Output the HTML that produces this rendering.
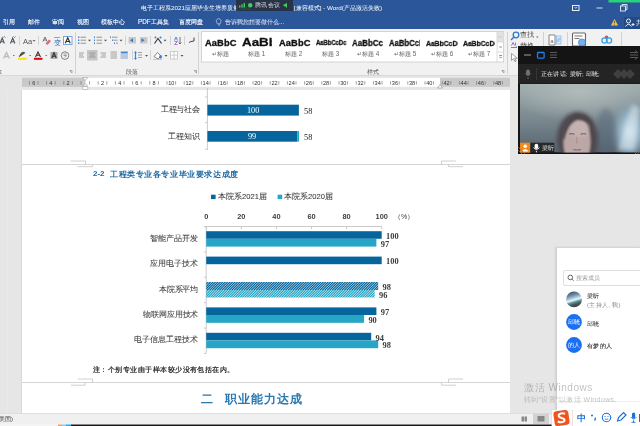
<!DOCTYPE html>
<html><head><meta charset="utf-8">
<style>
*{margin:0;padding:0;box-sizing:border-box}
html,body{width:640px;height:426px;overflow:hidden;background:#e6e6e6;font-family:"Liberation Sans",sans-serif;position:relative}
.a{position:absolute}
.t{position:absolute;white-space:nowrap;line-height:1;will-change:transform}
#titlebar{left:0;top:0;width:640px;height:29px;background:#2b579a}
#ribbon{left:0;top:29px;width:640px;height:47px;background:#f1f1f1;border-bottom:1px solid #d8d8d8}
#rulerrow{left:0;top:76px;width:640px;height:12px;background:#e6e6e6}
#page{left:22px;top:89.5px;width:488px;height:323.5px;background:#fff}
#status{left:0;top:413px;width:640px;height:11px;background:#f0f0f0;border-top:1px solid #dedede}
#taskbar{left:0;top:424px;width:640px;height:2px;background:#f4f4f4}
.tab{top:19px;font-size:6.3px;color:#fff;-webkit-text-stroke:0.1px currentColor}
.ttl{font-size:6.25px;color:#fff}
</style></head><body>
<!-- TITLE BAR -->
<div id="titlebar" class="a">
  <div class="t ttl" style="left:141px;top:5px">电子工程系2021应届毕业生培养质量.doc</div>
  <div class="t ttl" style="left:294px;top:5px">[兼容模式] - Word(产品激活失败)</div>
  <div class="t tab" style="left:3px">引用</div>
  <div class="t tab" style="left:28px">邮件</div>
  <div class="t tab" style="left:52px">审阅</div>
  <div class="t tab" style="left:77px">视图</div>
  <div class="t tab" style="left:101px">模板中心</div>
  <div class="t tab" style="left:137.5px">PDF工具集</div>
  <div class="t tab" style="left:179px">百度网盘</div>
  <div class="t tab" style="left:224.5px;color:#c9d5ea">告诉我您想要做什么...</div>
</div>
<svg class="a" style="left:0;top:0" width="640" height="29" viewBox="0 0 640 29">
 <rect x="236" y="0" width="57" height="11" fill="#27303c" opacity="0.88"/>
 <g fill="#3fd05a"><rect x="239" y="5.5" width="1.4" height="2"/><rect x="241.3" y="4.3" width="1.4" height="3.2"/><rect x="243.6" y="3" width="1.4" height="4.5"/></g>
 <circle cx="250.2" cy="5.2" r="2.2" fill="#3fd05a"/>
 <path d="M283.5,4.3 h1.5 l2,-1.6 v5.2 l-2,-1.6 h-1.5z" fill="#3fd05a"/>
 <rect x="572.5" y="5.5" width="6.5" height="5" fill="none" stroke="#fff" stroke-width="0.9"/>
 <path d="M574.5,7 l1.25,1.4 l1.25,-1.4" stroke="#fff" stroke-width="0.7" fill="none"/>
 <path d="M596.5,8 h6" stroke="#fff" stroke-width="0.8"/>
 <rect x="620.5" y="6" width="5" height="5" fill="none" stroke="#fff" stroke-width="0.8"/>
 <path d="M622,6 v-1.5 h5 v5 h-1.5" stroke="#fff" stroke-width="0.8" fill="none"/>
 <rect x="608.5" y="0" width="31.5" height="2.5" fill="#28d17c"/>
 <path d="M614.5,19 l3.6,6.5 h-7.2z" fill="#f3c14a"/>
 <path d="M614.5,21 v2.4 M614.5,24.2 v0.6" stroke="#333" stroke-width="0.7"/>
 <rect x="624" y="17" width="16" height="12" fill="#234a86"/>
 <circle cx="628.5" cy="21" r="2" fill="none" stroke="#fff" stroke-width="0.9"/>
 <path d="M625.5,26.5 q3,-4.5 6,0 M631.5,24.5 h3 M633,23 v3" stroke="#fff" stroke-width="0.9" fill="none"/>
 <path d="M216.8,22.5 a2.4,2.4 0 1,1 3.8,0 l-0.5,1.3 h-2.8z M218,25 h2.2" stroke="#c9d5ea" stroke-width="0.7" fill="none"/>
</svg>
<div class="t" style="left:255px;top:2.2px;font-size:6px;color:#d8d8d8;letter-spacing:0.3px">腾讯会议</div>
<div class="t" style="left:636px;top:19.5px;font-size:6.5px;color:#fff">共</div>
<!-- RIBBON -->
<div id="ribbon" class="a"></div>
<svg class="a" style="left:0;top:0" width="640" height="90" viewBox="0 0 640 90">
 <g fill="none" stroke="#d2d2d2" stroke-width="1">
  <line x1="75.5" y1="32" x2="75.5" y2="74"/>
  <line x1="198.5" y1="32" x2="198.5" y2="74"/>
  <line x1="507.5" y1="32" x2="507.5" y2="74"/>
  <line x1="543.5" y1="32" x2="543.5" y2="74"/>
  <line x1="567.5" y1="32" x2="567.5" y2="74"/>
  <line x1="621.5" y1="32" x2="621.5" y2="74"/>
  <line x1="19.5" y1="36" x2="19.5" y2="45"/>
  <line x1="38.5" y1="36" x2="38.5" y2="45"/>
  <line x1="125.5" y1="36" x2="125.5" y2="45"/>
  <line x1="150.5" y1="36" x2="150.5" y2="45"/>
  <line x1="170.5" y1="36" x2="170.5" y2="45"/>
  <line x1="184.5" y1="36" x2="184.5" y2="45"/>
  <line x1="132.5" y1="50" x2="132.5" y2="60"/>
  <line x1="150.5" y1="50" x2="150.5" y2="60"/>
 </g>
 <!-- font group row1 -->
 <g fill="none" stroke="#555" stroke-width="1.1">
  <path d="M0,43.5 L2.2,38 L4.4,43.5 M0.8,41.8 H3.6"/>
  <path d="M10.5,43.5 L12.7,38 L14.9,43.5 M11.3,41.8 H14.1"/>
 </g>
 <path d="M3.3,37.5 l1,-1 l1,1 M13.5,36.5 l1,1 l1,-1" stroke="#2f79c8" stroke-width="1" fill="none"/>
 <text x="23" y="43.5" font-family="Liberation Sans" font-size="7.5" fill="#555">Aa</text>
 <path d="M32.5,40 h3 l-1.5,1.8z" fill="#666"/>
 <path d="M43,41.5 L45,37 L47,41.5 M43.6,40 H46.4" stroke="#666" stroke-width="0.9" fill="none"/>
 <path d="M45.5,43.5 L49,39.5 L51,41 L47.5,45z" fill="#e8667a"/>
 <path d="M54,37.5 h6" stroke="#888" stroke-width="0.8"/>
 <text x="54" y="44.5" font-size="6.5" fill="#2f6fb8" font-family="Liberation Sans">变</text>
 <rect x="63.5" y="36.5" width="8.5" height="8" fill="#fff" stroke="#7aa7d8" stroke-width="1"/>
 <path d="M65.3,43.3 L67.75,37.7 L70.2,43.3 M66.2,41.5 H69.3" stroke="#333" stroke-width="1.2" fill="none"/>
 <!-- font group row2 -->
 <path d="M3.5,58.5 L6.5,52.5 L9.5,58.5 M4.7,56.5 H8.3" stroke="#bdbdbd" stroke-width="1.3" fill="none"/>
 <path d="M13,55.5 h1.5 M29.5,55.5 h1.5 M45.5,55.5 h1.5" stroke="#777" stroke-width="1"/>
 <path d="M19,56.5 L25,52.5 M20,55.5 l2,-3 M22,53.5 l1.5,-1.5" stroke="#444" stroke-width="1.1" fill="none"/>
 <rect x="18" y="57.8" width="8.5" height="2" fill="#f5e400"/>
 <path d="M35.5,57 L38,52 L40.5,57 M36.4,55.3 H39.6" stroke="#333" stroke-width="1.1" fill="none"/>
 <rect x="34" y="57.8" width="8.5" height="2" fill="#e60000"/>
 <rect x="50.5" y="52" width="7" height="6.8" fill="#a9a9a9"/>
 <path d="M51.8,58 L54,52.7 L56.2,58 M52.6,56.3 H55.4" stroke="#333" stroke-width="1.1" fill="none"/>
 <circle cx="65" cy="55.6" r="3.8" fill="none" stroke="#777" stroke-width="0.9"/>
 <path d="M63.5,54 h3 M63.5,55.5 h3 l-1.5,2" stroke="#777" stroke-width="0.7" fill="none"/>
 <path d="M69.5,70.5 h2.5 v2.5 M70,71 l2,2" stroke="#888" stroke-width="0.7" fill="none"/>
 <path d="M194,70.5 h2.5 v2.5 M194.5,71 l2,2" stroke="#888" stroke-width="0.7" fill="none"/>
 <path d="M501.5,70.5 h2.5 v2.5 M502,71 l2,2" stroke="#888" stroke-width="0.7" fill="none"/>
 <!-- paragraph row1 -->
 <g fill="#3a7fd0">
  <rect x="78" y="36.5" width="1.4" height="1.4"/><rect x="78" y="39.5" width="1.4" height="1.4"/><rect x="78" y="42.5" width="1.4" height="1.4"/>
  <rect x="94" y="36.5" width="1" height="1.6"/><rect x="94" y="39.5" width="1" height="1.6"/><rect x="94" y="42.5" width="1" height="1.6"/>
  <rect x="110" y="36.5" width="1" height="1.4"/><rect x="112" y="39.5" width="1.2" height="1.4"/><rect x="114" y="42.5" width="1" height="1.4"/>
 </g>
 <g stroke="#8a8a8a" stroke-width="0.9">
  <path d="M80.5,37.2 h5.5 M80.5,40.2 h5.5 M80.5,43.2 h5.5"/>
  <path d="M96.5,37.2 h5.5 M96.5,40.2 h5.5 M96.5,43.2 h5.5"/>
  <path d="M112,37.2 h5.5 M114,40.2 h3.5 M116,43.2 h2"/>
 </g>
 <path d="M88,39.8 h3 l-1.5,1.8z M104,39.8 h3 l-1.5,1.8z M119.5,39.8 h3 l-1.5,1.8z M163.5,39.8 h3 l-1.5,1.8z" fill="#555"/>
 <rect x="128.5" y="37" width="7.5" height="6.5" fill="#c9c9c9"/>
 <rect x="140" y="37" width="7.5" height="6.5" fill="#c9c9c9"/>
 <path d="M133,38.2 v4 l-3,-2z M141.5,38.2 v4 l3,-2z" fill="#2f79c8"/>
 <path d="M154.5,43.5 L158,38.5 L161.5,43.5" stroke="#333" stroke-width="1.1" fill="none"/>
 <circle cx="155.5" cy="37.5" r="1" fill="#3a7fd0"/><circle cx="160.5" cy="37.5" r="1" fill="#3a7fd0"/>
 <path d="M174.5,40.5 l1.5,-3.5 l1.5,3.5" stroke="#3a7fd0" stroke-width="0.9" fill="none"/>
 <path d="M174.5,41.5 h3 l-3,3 h3" stroke="#a05cc8" stroke-width="0.8" fill="none"/>
 <path d="M180,37 v7 M178.8,42.5 l1.2,1.5 l1.2,-1.5" stroke="#555" stroke-width="0.8" fill="none"/>
 <path d="M189,42.5 l2,-1 l3,-0.5 v-3.5" stroke="#444" stroke-width="1" fill="none"/>
 <!-- paragraph row2 -->
 <rect x="87" y="50" width="10.5" height="10.5" fill="#c6c6c6"/>
 <g stroke="#8d8d8d" stroke-width="0.8">
  <path d="M79,53 h5 M79,55 h4 M79,57 h5"/>
  <path d="M89,53 h6.5 M89.8,55 h5 M89,57 h6.5"/>
  <path d="M100.5,53 h5.5 M101.5,55 h4.5 M100.5,57 h5.5"/>
  <path d="M110.5,52 h6.5 M110.5,54 h6.5 M110.5,56 h6.5 M110.5,58 h6.5"/>
 </g>
 <rect x="120.5" y="51" width="7.5" height="8" fill="#b9c9dc"/>
 <path d="M121,52.5 h6.5" stroke="#3a7fd0" stroke-width="1.2"/>
 <path d="M135.5,52 v7" stroke="#3a7fd0" stroke-width="1.2"/>
 <path d="M134.5,53 l1,-1.5 l1,1.5 M134.5,58 l1,1.5 l1,-1.5" stroke="#3a7fd0" stroke-width="0.9" fill="none"/>
 <path d="M138,52.5 h4 M138,55 h4 M138,57.5 h4" stroke="#8d8d8d" stroke-width="0.8"/>
 <path d="M145,55 h3 l-1.5,1.8z M164.5,55 h3 l-1.5,1.8z M180.5,55 h3 l-1.5,1.8z" fill="#555"/>
 <path d="M154,56.5 l3.5,-4 l3.5,3.5 l-3,3z" fill="#fff" stroke="#666" stroke-width="0.8"/>
 <path d="M160.5,55 a1.4,1.8 0 1,0 0.1,0" fill="#3a7fd0"/>
 <path d="M153,59.5 h9" stroke="#bbb" stroke-width="0.8"/>
 <rect x="170.5" y="51.5" width="7" height="7.5" fill="#fff" stroke="#c8c8c8" stroke-width="0.9"/>
 <path d="M174,51.5 v7.5 M170.5,55.2 h7" stroke="#c8c8c8" stroke-width="0.9"/>
 <!-- styles gallery -->
 <rect x="201.5" y="31.5" width="302" height="30.5" fill="#fff" stroke="#d4d4d4"/>
 <rect x="497" y="32" width="6.5" height="10" fill="#e2e2e2"/>
 <path d="M497,32 v30 M497,42 h7 M497,52 h7" stroke="#d4d4d4" stroke-width="0.8"/>
 <path d="M499.3,47 h2.6 M499.3,55.5 h2.6 M499.5,56.8 l1.1,1.3 l1.1,-1.3" stroke="#555" stroke-width="0.7" fill="none"/>
 <path d="M499,37.5 l1.5,-1.5 l1.5,1.5" stroke="#bbb" stroke-width="0.8" fill="none"/>
 <!-- editing -->
 <circle cx="516" cy="35" r="2.8" fill="none" stroke="#2f79c8" stroke-width="1.3"/>
 <path d="M514,37 l-3,3" stroke="#2f79c8" stroke-width="1.5"/>
 <path d="M536,36.5 h2.5 l-1.25,1.5z" fill="#666"/>
 <path d="M511.5,45.5 l1.5,-3 l1.5,3 M515.5,42.5 v3" stroke="#a05cc8" stroke-width="0.9" fill="none"/><path d="M511,47.5 h6 l-1.2,-1" stroke="#2f79c8" stroke-width="0.8" fill="none"/><path d="M511.5,53.5 v7 l2,-1.8 l1.5,3 l1.2,-0.6 l-1.5,-2.8 h2.6z" fill="#fff" stroke="#777" stroke-width="0.7"/>
 <path d="M549,35 h6 v10 h-6z" fill="#fff" stroke="#777" stroke-width="0.9"/><text x="550.3" y="43" font-size="6" fill="#666" font-family="Liberation Sans">a</text>
 <rect x="556.5" y="36" width="4.5" height="8" fill="#dbe7f6" stroke="#8ab4e0" stroke-width="0.7"/><path d="M557.5,39 h3 M559.5,41 h-3" stroke="#4a90d9" stroke-width="0.7"/>
 <rect x="572.5" y="33" width="13" height="13" rx="1" fill="#fff" stroke="#666" stroke-width="1.1"/>
 <path d="M574.5,36 h8 M574.5,38.5 h5" stroke="#777" stroke-width="1"/>
 <circle cx="582" cy="42.5" r="3.6" fill="#7ab0ea" stroke="#3a7fd0" stroke-width="0.7"/>
 <circle cx="606.5" cy="37.3" r="1.8" fill="#e04a4a"/>
 <circle cx="604.5" cy="40.5" r="2.6" fill="none" stroke="#3aa0e6" stroke-width="1.3"/>
 <circle cx="609" cy="40.5" r="2.6" fill="none" stroke="#3aa0e6" stroke-width="1.3"/>
</svg>
<div class="t" style="left:126px;top:68.5px;font-size:6.4px;color:#555">段落</div>
<div class="t" style="left:367px;top:68.5px;font-size:6.4px;color:#555">样式</div>
<div class="t" style="left:-10.5px;top:68.5px;font-size:6.4px;color:#555">字体</div>
<div class="t" style="left:519.5px;top:31px;font-size:7px;color:#444">查找</div>
<div class="t" style="left:519.5px;top:41.5px;font-size:7px;color:#444">替换</div>
<!-- gallery items -->
<div class="a" style="left:203px;top:32px;width:294px;height:29px;overflow:hidden">
 <div class="t" style="left:1.5px;top:6px;font:bold 9.3px 'Liberation Sans';color:#111;-webkit-text-stroke:0.3px #111;letter-spacing:0.1px">AaBbC</div>
 <div class="a" style="left:38.5px;top:0;width:30px;height:20px;overflow:hidden"><div class="t" style="left:0;top:2.5px;font:bold 11.8px 'Liberation Sans';color:#111;-webkit-text-stroke:0.3px #111;transform:scaleX(1.13);transform-origin:0 0">AaBb</div></div>
 <div class="t" style="left:75.5px;top:6px;font:bold 9.3px 'Liberation Sans';color:#111;-webkit-text-stroke:0.3px #111;letter-spacing:0.1px">AaBbC</div>
 <div class="a" style="left:112.5px;top:0;width:31px;height:20px;overflow:hidden"><div class="t" style="left:0;top:7.2px;font:bold 6.4px 'Liberation Sans';color:#111;-webkit-text-stroke:0.3px #111;transform:scaleX(0.92);transform-origin:0 0">AaBbCcDc</div></div>
 <div class="a" style="left:149px;top:0;width:31px;height:20px;overflow:hidden"><div class="t" style="left:0;top:5.3px;font:bold 9.4px 'Liberation Sans';color:#111;-webkit-text-stroke:0.3px #111;transform:scaleX(0.85);transform-origin:0 0">AaBbCc</div></div>
 <div class="a" style="left:186px;top:0;width:31px;height:20px;overflow:hidden"><div class="t" style="left:0;top:5.9px;font:bold 9px 'Liberation Sans';color:#111;-webkit-text-stroke:0.3px #111;transform:scaleX(0.857);transform-origin:0 0">AaBbCcD</div></div>
 <div class="a" style="left:223px;top:0;width:32px;height:20px;overflow:hidden"><div class="t" style="left:0;top:6.8px;font:bold 7.3px 'Liberation Sans';color:#111;-webkit-text-stroke:0.3px #111;transform:scaleX(0.93);transform-origin:0 0">AaBbCcD</div></div>
 <div class="a" style="left:260px;top:0;width:32px;height:20px;overflow:hidden"><div class="t" style="left:0;top:6.8px;font:bold 7.3px 'Liberation Sans';color:#111;-webkit-text-stroke:0.3px #111;transform:scaleX(0.93);transform-origin:0 0">AaBbCcD</div></div>
 <div class="t" style="left:8.5px;top:19.3px;font-size:6.3px;color:#666">&#x21B5;标题</div>
 <div class="t" style="left:45px;top:19.3px;font-size:6.3px;color:#666">标题 1</div>
 <div class="t" style="left:82px;top:19.3px;font-size:6.3px;color:#666">标题 2</div>
 <div class="t" style="left:118.5px;top:19.3px;font-size:6.3px;color:#666">标题 3</div>
 <div class="t" style="left:154px;top:19.3px;font-size:6.3px;color:#666">&#x21B5;标题 4</div>
 <div class="t" style="left:191px;top:19.3px;font-size:6.3px;color:#666">&#x21B5;标题 5</div>
 <div class="t" style="left:228px;top:19.3px;font-size:6.3px;color:#666">&#x21B5;标题 6</div>
 <div class="t" style="left:265px;top:19.3px;font-size:6.3px;color:#666">&#x21B5;标题 7</div>
</div>
</div>
<!-- RULER -->
<div id="rulerrow" class="a"></div>
<svg class="a" style="left:0;top:0" width="640" height="90" viewBox="0 0 640 90">
<rect x="22" y="77.8" width="488" height="9.1" fill="#c9c9c9"/>
<rect x="85.3" y="77.8" width="354.7" height="9.1" fill="#fff"/>
<path d="M29.4,81.2 v3.4 M38.0,81.2 v3.4 M46.6,81.2 v3.4 M55.2,81.2 v3.4 M63.8,81.2 v3.4 M72.4,81.2 v3.4 M81.0,81.2 v3.4 M89.6,81.2 v3.4 M98.2,81.2 v3.4 M106.8,81.2 v3.4 M115.4,81.2 v3.4 M124.0,81.2 v3.4 M132.6,81.2 v3.4 M141.2,81.2 v3.4 M149.8,81.2 v3.4 M158.4,81.2 v3.4 M167.0,81.2 v3.4 M175.6,81.2 v3.4 M184.2,81.2 v3.4 M192.8,81.2 v3.4 M201.4,81.2 v3.4 M210.0,81.2 v3.4 M218.6,81.2 v3.4 M227.2,81.2 v3.4 M235.8,81.2 v3.4 M244.4,81.2 v3.4 M253.0,81.2 v3.4 M261.6,81.2 v3.4 M270.2,81.2 v3.4 M278.8,81.2 v3.4 M287.4,81.2 v3.4 M296.0,81.2 v3.4 M304.6,81.2 v3.4 M313.2,81.2 v3.4 M321.8,81.2 v3.4 M330.4,81.2 v3.4 M339.0,81.2 v3.4 M347.6,81.2 v3.4 M356.2,81.2 v3.4 M364.8,81.2 v3.4 M373.4,81.2 v3.4 M382.0,81.2 v3.4 M390.6,81.2 v3.4 M399.2,81.2 v3.4 M407.8,81.2 v3.4 M416.4,81.2 v3.4 M425.0,81.2 v3.4 M433.6,81.2 v3.4 M442.2,81.2 v3.4 M450.8,81.2 v3.4 M459.4,81.2 v3.4 M468.0,81.2 v3.4 M476.6,81.2 v3.4 M485.2,81.2 v3.4 M493.8,81.2 v3.4 M502.4,81.2 v3.4" stroke="#666" stroke-width="0.6"/>
<g font-family="Liberation Sans" font-size="5.6" fill="#333"><text x="33.7" y="85.2" text-anchor="middle">6</text><text x="50.9" y="85.2" text-anchor="middle">4</text><text x="68.1" y="85.2" text-anchor="middle">2</text><text x="102.5" y="85.2" text-anchor="middle">2</text><text x="119.7" y="85.2" text-anchor="middle">4</text><text x="136.9" y="85.2" text-anchor="middle">6</text><text x="154.1" y="85.2" text-anchor="middle">8</text><text x="171.3" y="85.2" text-anchor="middle">10</text><text x="188.5" y="85.2" text-anchor="middle">12</text><text x="205.7" y="85.2" text-anchor="middle">14</text><text x="222.9" y="85.2" text-anchor="middle">16</text><text x="240.1" y="85.2" text-anchor="middle">18</text><text x="257.3" y="85.2" text-anchor="middle">20</text><text x="274.5" y="85.2" text-anchor="middle">22</text><text x="291.7" y="85.2" text-anchor="middle">24</text><text x="308.9" y="85.2" text-anchor="middle">26</text><text x="326.1" y="85.2" text-anchor="middle">28</text><text x="343.3" y="85.2" text-anchor="middle">30</text><text x="360.5" y="85.2" text-anchor="middle">32</text><text x="377.7" y="85.2" text-anchor="middle">34</text><text x="394.9" y="85.2" text-anchor="middle">36</text><text x="412.1" y="85.2" text-anchor="middle">38</text><text x="429.3" y="85.2" text-anchor="middle">40</text><text x="446.5" y="85.2" text-anchor="middle">42</text><text x="463.7" y="85.2" text-anchor="middle">44</text><text x="480.9" y="85.2" text-anchor="middle">46</text><text x="498.1" y="85.2" text-anchor="middle">48</text></g>
<path d="M82.6,77.6 h5.2 l-2.6,3z M82.6,86.2 l2.6,-2.6 l2.6,2.6z" fill="#fff" stroke="#999" stroke-width="0.6"/>
<rect x="82.6" y="86.6" width="5.2" height="3" rx="1" fill="#fff" stroke="#999" stroke-width="0.6"/>
<path d="M437.5,88 l2.5,-3.5 l2.5,3.5z" fill="#fff" stroke="#888" stroke-width="0.6"/>
</svg>
<!-- PAGE -->
<div id="page" class="a"></div>
<div class="a" style="left:21px;top:89.5px;width:1px;height:323.5px;background:#d9d9d9"></div>
<div class="a" style="left:7px;top:89.5px;width:1px;height:323.5px;background:#e9e9e9"></div>
<svg class="a" style="left:0;top:0" width="640" height="426" viewBox="0 0 640 426">
<defs><pattern id="hd" width="1.66" height="3" patternUnits="userSpaceOnUse" patternTransform="rotate(45)"><rect width="1.66" height="3" fill="#fff"/><rect width="0.95" height="3" fill="#05659c"/></pattern>
<pattern id="hc" width="1.66" height="3" patternUnits="userSpaceOnUse" patternTransform="rotate(45)"><rect width="1.66" height="3" fill="#fff"/><rect width="0.95" height="3" fill="#26a6c6"/></pattern></defs>
<path d="M22,164.5 H510" stroke="#d4d4d4" stroke-width="1"/>
<path d="M22,382.5 H510" stroke="#d6d6d6" stroke-width="1.2"/>
<path d="M70.5,161.0 H85.5 V164.5 M77.5,166.7 H92.5 V164.5 M456,161.0 H441.5 V164.5 M463,166.7 H448.5 V164.5" stroke="#c4c4c4" stroke-width="0.8" fill="none"/>
<path d="M77.8,379.0 H92.5 V382.5 M70.8,385.2 H85 V382.5 M463,379.0 H448.5 V382.5 M456,385.2 H441.5 V382.5" stroke="#c4c4c4" stroke-width="0.8" fill="none"/>
<path d="M207.4,88 V150 M205,97 H207.4 M205,122.7 H207.4 M205,149.2 H207.4" stroke="#bfbfbf" stroke-width="0.8"/>
<rect x="207.4" y="104.7" width="91.5" height="10.9" fill="#05659c"/>
<rect x="207.4" y="131" width="90" height="10.7" fill="#05659c"/>
<rect x="297.4" y="131" width="1.6" height="10.7" fill="#26a6c6"/>
<path d="M206.2,226.5 H381.7 M206.2,226.5 v2.5 M241.3,226.5 v2.5 M276.4,226.5 v2.5 M311.5,226.5 v2.5 M346.6,226.5 v2.5 M381.7,226.5 v2.5 M206.2,226.5 V353.5 M206.2,226.5 h-2.2 M206.2,251.9 h-2.2 M206.2,277.3 h-2.2 M206.2,302.7 h-2.2 M206.2,328.1 h-2.2 M206.2,353.5 h-2.2" stroke="#bfbfbf" stroke-width="0.8" fill="none"/>
<rect x="206.2" y="231.2" width="175.5" height="7.6" fill="#05659c"/>
<rect x="206.2" y="238.8" width="170.2" height="7.8" fill="#26a6c6"/>
<rect x="206.2" y="256.6" width="175.5" height="7.6" fill="#05659c"/>
<clipPath id="chd"><rect x="206.2" y="282.0" width="172.0" height="8.0"/></clipPath>
<path clip-path="url(#chd)" d="M194.20,291.00 L204.20,281.00 M196.65,291.00 L206.65,281.00 M199.10,291.00 L209.10,281.00 M201.55,291.00 L211.55,281.00 M204.00,291.00 L214.00,281.00 M206.45,291.00 L216.45,281.00 M208.90,291.00 L218.90,281.00 M211.35,291.00 L221.35,281.00 M213.80,291.00 L223.80,281.00 M216.25,291.00 L226.25,281.00 M218.70,291.00 L228.70,281.00 M221.15,291.00 L231.15,281.00 M223.60,291.00 L233.60,281.00 M226.05,291.00 L236.05,281.00 M228.50,291.00 L238.50,281.00 M230.95,291.00 L240.95,281.00 M233.40,291.00 L243.40,281.00 M235.85,291.00 L245.85,281.00 M238.30,291.00 L248.30,281.00 M240.75,291.00 L250.75,281.00 M243.20,291.00 L253.20,281.00 M245.65,291.00 L255.65,281.00 M248.10,291.00 L258.10,281.00 M250.55,291.00 L260.55,281.00 M253.00,291.00 L263.00,281.00 M255.45,291.00 L265.45,281.00 M257.90,291.00 L267.90,281.00 M260.35,291.00 L270.35,281.00 M262.80,291.00 L272.80,281.00 M265.25,291.00 L275.25,281.00 M267.70,291.00 L277.70,281.00 M270.15,291.00 L280.15,281.00 M272.60,291.00 L282.60,281.00 M275.05,291.00 L285.05,281.00 M277.50,291.00 L287.50,281.00 M279.95,291.00 L289.95,281.00 M282.40,291.00 L292.40,281.00 M284.85,291.00 L294.85,281.00 M287.30,291.00 L297.30,281.00 M289.75,291.00 L299.75,281.00 M292.20,291.00 L302.20,281.00 M294.65,291.00 L304.65,281.00 M297.10,291.00 L307.10,281.00 M299.55,291.00 L309.55,281.00 M302.00,291.00 L312.00,281.00 M304.45,291.00 L314.45,281.00 M306.90,291.00 L316.90,281.00 M309.35,291.00 L319.35,281.00 M311.80,291.00 L321.80,281.00 M314.25,291.00 L324.25,281.00 M316.70,291.00 L326.70,281.00 M319.15,291.00 L329.15,281.00 M321.60,291.00 L331.60,281.00 M324.05,291.00 L334.05,281.00 M326.50,291.00 L336.50,281.00 M328.95,291.00 L338.95,281.00 M331.40,291.00 L341.40,281.00 M333.85,291.00 L343.85,281.00 M336.30,291.00 L346.30,281.00 M338.75,291.00 L348.75,281.00 M341.20,291.00 L351.20,281.00 M343.65,291.00 L353.65,281.00 M346.10,291.00 L356.10,281.00 M348.55,291.00 L358.55,281.00 M351.00,291.00 L361.00,281.00 M353.45,291.00 L363.45,281.00 M355.90,291.00 L365.90,281.00 M358.35,291.00 L368.35,281.00 M360.80,291.00 L370.80,281.00 M363.25,291.00 L373.25,281.00 M365.70,291.00 L375.70,281.00 M368.15,291.00 L378.15,281.00 M370.60,291.00 L380.60,281.00 M373.05,291.00 L383.05,281.00 M375.50,291.00 L385.50,281.00 M377.95,291.00 L387.95,281.00" stroke="#05659c" stroke-width="1.25"/>
<clipPath id="chc"><rect x="206.2" y="290.0" width="168.5" height="7.6"/></clipPath>
<path clip-path="url(#chc)" d="M194.60,298.60 L204.20,289.00 M197.05,298.60 L206.65,289.00 M199.50,298.60 L209.10,289.00 M201.95,298.60 L211.55,289.00 M204.40,298.60 L214.00,289.00 M206.85,298.60 L216.45,289.00 M209.30,298.60 L218.90,289.00 M211.75,298.60 L221.35,289.00 M214.20,298.60 L223.80,289.00 M216.65,298.60 L226.25,289.00 M219.10,298.60 L228.70,289.00 M221.55,298.60 L231.15,289.00 M224.00,298.60 L233.60,289.00 M226.45,298.60 L236.05,289.00 M228.90,298.60 L238.50,289.00 M231.35,298.60 L240.95,289.00 M233.80,298.60 L243.40,289.00 M236.25,298.60 L245.85,289.00 M238.70,298.60 L248.30,289.00 M241.15,298.60 L250.75,289.00 M243.60,298.60 L253.20,289.00 M246.05,298.60 L255.65,289.00 M248.50,298.60 L258.10,289.00 M250.95,298.60 L260.55,289.00 M253.40,298.60 L263.00,289.00 M255.85,298.60 L265.45,289.00 M258.30,298.60 L267.90,289.00 M260.75,298.60 L270.35,289.00 M263.20,298.60 L272.80,289.00 M265.65,298.60 L275.25,289.00 M268.10,298.60 L277.70,289.00 M270.55,298.60 L280.15,289.00 M273.00,298.60 L282.60,289.00 M275.45,298.60 L285.05,289.00 M277.90,298.60 L287.50,289.00 M280.35,298.60 L289.95,289.00 M282.80,298.60 L292.40,289.00 M285.25,298.60 L294.85,289.00 M287.70,298.60 L297.30,289.00 M290.15,298.60 L299.75,289.00 M292.60,298.60 L302.20,289.00 M295.05,298.60 L304.65,289.00 M297.50,298.60 L307.10,289.00 M299.95,298.60 L309.55,289.00 M302.40,298.60 L312.00,289.00 M304.85,298.60 L314.45,289.00 M307.30,298.60 L316.90,289.00 M309.75,298.60 L319.35,289.00 M312.20,298.60 L321.80,289.00 M314.65,298.60 L324.25,289.00 M317.10,298.60 L326.70,289.00 M319.55,298.60 L329.15,289.00 M322.00,298.60 L331.60,289.00 M324.45,298.60 L334.05,289.00 M326.90,298.60 L336.50,289.00 M329.35,298.60 L338.95,289.00 M331.80,298.60 L341.40,289.00 M334.25,298.60 L343.85,289.00 M336.70,298.60 L346.30,289.00 M339.15,298.60 L348.75,289.00 M341.60,298.60 L351.20,289.00 M344.05,298.60 L353.65,289.00 M346.50,298.60 L356.10,289.00 M348.95,298.60 L358.55,289.00 M351.40,298.60 L361.00,289.00 M353.85,298.60 L363.45,289.00 M356.30,298.60 L365.90,289.00 M358.75,298.60 L368.35,289.00 M361.20,298.60 L370.80,289.00 M363.65,298.60 L373.25,289.00 M366.10,298.60 L375.70,289.00 M368.55,298.60 L378.15,289.00 M371.00,298.60 L380.60,289.00 M373.45,298.60 L383.05,289.00 M375.90,298.60 L385.50,289.00" stroke="#26a6c6" stroke-width="1.25"/>
<rect x="206.2" y="307.4" width="170.2" height="7.6" fill="#05659c"/>
<rect x="206.2" y="315.0" width="157.9" height="7.8" fill="#26a6c6"/>
<rect x="206.2" y="332.8" width="165.0" height="7.6" fill="#05659c"/>
<rect x="206.2" y="340.4" width="172.0" height="7.8" fill="#26a6c6"/>
<g font-family="Liberation Serif" font-size="8.4" font-weight="bold" fill="#3a3a3a">
<text x="386.0" y="239.0">100</text>
<text x="380.7" y="247.1">97</text>
<text x="386.0" y="264.0">100</text>
<text x="382.5" y="290.4">98</text>
<text x="379.0" y="297.6">96</text>
<text x="380.7" y="315.1">97</text>
<text x="368.4" y="323.3">90</text>
<text x="375.5" y="340.5">94</text>
<text x="382.5" y="348.0">98</text>
</g>
<rect x="211" y="194.7" width="4.6" height="4.4" fill="#05659c"/>
<rect x="277.6" y="194.7" width="4.6" height="4.4" fill="#26a6c6"/>
<g font-family="Liberation Sans" font-size="7.4" font-weight="bold" fill="#404040" text-anchor="middle">
<text x="206.2" y="218.6">0</text>
<text x="241.3" y="218.6">20</text>
<text x="276.4" y="218.6">40</text>
<text x="311.5" y="218.6">60</text>
<text x="346.6" y="218.6">80</text>
<text x="381.7" y="218.6">100</text>
</g>
</svg>
<div class="t" style="left:161px;top:106px;font-size:8px;letter-spacing:-0.3px;color:#3a3a3a;-webkit-text-stroke:0.06px #3a3a3a">工程与社会</div>
<div class="t" style="left:168px;top:132.5px;font-size:8px;color:#3a3a3a;-webkit-text-stroke:0.06px #3a3a3a">工程知识</div>
<div class="t" style="left:247.3px;top:106.3px;font:8.2px 'Liberation Serif';color:#fff">100</div>
<div class="t" style="left:248.3px;top:132.3px;font:8.2px 'Liberation Serif';color:#fff">99</div>
<div class="t" style="left:303.7px;top:106.6px;font:8.3px 'Liberation Serif';color:#222">58</div>
<div class="t" style="left:303.7px;top:132.6px;font:8.3px 'Liberation Serif';color:#222">58</div>
<div class="t" style="left:92.5px;top:169px;font:bold 8px 'Liberation Sans';color:#1d6aa3">2-2</div>
<div class="t" style="left:110px;top:169px;font:bold 8px 'Liberation Serif',serif;color:#1d6aa3;letter-spacing:0.58px">工程类专业各专业毕业要求达成度</div>
<div class="t" style="left:217.5px;top:192.5px;font-size:7.6px;color:#3a3a3a;-webkit-text-stroke:0.06px #3a3a3a">本院系2021届</div>
<div class="t" style="left:284px;top:192.5px;font-size:7.6px;color:#3a3a3a;-webkit-text-stroke:0.06px #3a3a3a">本院系2020届</div>
<div class="t" style="left:394px;top:212.5px;font-size:7px;color:#404040">（%）</div>
<div class="t" style="left:150px;top:235px;font-size:8px;color:#3a3a3a;-webkit-text-stroke:0.06px #3a3a3a">智能产品开发</div>
<div class="t" style="left:150px;top:260px;font-size:8px;color:#3a3a3a;-webkit-text-stroke:0.06px #3a3a3a">应用电子技术</div>
<div class="t" style="left:158.5px;top:286px;font-size:8px;letter-spacing:-0.2px;color:#3a3a3a;-webkit-text-stroke:0.06px #3a3a3a">本院系平均</div>
<div class="t" style="left:142.5px;top:310.5px;font-size:8px;letter-spacing:-0.1px;color:#3a3a3a;-webkit-text-stroke:0.06px #3a3a3a">物联网应用技术</div>
<div class="t" style="left:134px;top:336px;font-size:8px;color:#3a3a3a;-webkit-text-stroke:0.06px #3a3a3a">电子信息工程技术</div>
<div class="t" style="left:92.5px;top:366.5px;font-size:7px;letter-spacing:0.46px;color:#1a1a1a;font-family:'Liberation Serif',serif;-webkit-text-stroke:0.2px #1a1a1a">注：个别专业由于样本较少没有包括在内。</div>
<div class="t" style="left:200.5px;top:391.2px;font:bold 12px 'Liberation Serif',serif;color:#2a78b0">二</div>
<div class="t" style="left:224.5px;top:391.2px;font:bold 12px 'Liberation Serif',serif;color:#2a78b0;letter-spacing:1px">职业能力达成</div>
<!-- VIDEO OVERLAY -->
<svg class="a" style="left:518px;top:46px" width="122" height="108" viewBox="518 46 122 108">
 <defs>
  <linearGradient id="vbg" x1="0" y1="0" x2="0" y2="1">
   <stop offset="0" stop-color="#9fadad"/><stop offset="0.5" stop-color="#7b8990"/><stop offset="1" stop-color="#56636f"/>
  </linearGradient>
  <radialGradient id="vtop" cx="0.5" cy="0.15" r="0.6">
   <stop offset="0" stop-color="#b3bcbb" stop-opacity="0.9"/><stop offset="1" stop-color="#b3bcbb" stop-opacity="0"/>
  </radialGradient>
  <radialGradient id="vright" cx="0.5" cy="0.5" r="0.5">
   <stop offset="0" stop-color="#d4e6f0"/><stop offset="0.5" stop-color="#9ec0d6" stop-opacity="0.8"/><stop offset="1" stop-color="#7e9fb6" stop-opacity="0"/>
  </radialGradient>
  <filter id="bl2"><feGaussianBlur stdDeviation="2"/></filter>
  <filter id="bl1"><feGaussianBlur stdDeviation="1.2"/></filter><filter id="bl05"><feGaussianBlur stdDeviation="0.4"/></filter>
  <clipPath id="vclip"><rect x="520" y="84" width="120" height="68.5"/></clipPath>
 </defs>
 <rect x="518" y="46" width="122" height="108" fill="#141414"/>
 <rect x="518" y="64" width="122" height="19.5" fill="#242424"/>
 <g clip-path="url(#vclip)">
  <rect x="520" y="84" width="120" height="68.5" fill="url(#vbg)"/>
  <rect x="520" y="84" width="120" height="50" fill="url(#vtop)"/>
  <ellipse cx="630" cy="132" rx="20" ry="32" fill="url(#vright)" filter="url(#bl2)"/>
  <path d="M618,150 L632,104 L640,108 L634,150z" fill="#dceaf2" opacity="0.55" filter="url(#bl2)"/>
  <ellipse cx="606" cy="132" rx="9" ry="24" fill="#56687a" opacity="0.45" filter="url(#bl2)"/>
  <ellipse cx="577.5" cy="139" rx="20.5" ry="27" fill="#4e474e" filter="url(#bl2)"/>
  <ellipse cx="577" cy="142" rx="13.8" ry="25" fill="#bba7a5" filter="url(#bl1)"/>
  <ellipse cx="579" cy="128" rx="10" ry="10" fill="#c8b6b4" opacity="0.75" filter="url(#bl2)"/>
  <path d="M562,138 Q563,118 576,114 Q590,113 594,128 Q586,119 577,120 Q568,123 564,140z" fill="#4e474e" filter="url(#bl1)"/>
  <path d="M569,134 q3,-0.8 5.5,0.2 M580.5,134.2 q3,-1 5.5,-0.2" stroke="#6e5856" stroke-width="1" fill="none" filter="url(#bl05)"/>
  <path d="M576.8,137 v6.5" stroke="#a08684" stroke-width="0.8" fill="none"/>
  <path d="M573.5,149.5 q3.8,1 7.6,0" stroke="#94686a" stroke-width="1.2" fill="none" filter="url(#bl05)"/>
 </g>
 <!-- title bar icons -->
 <path d="M524,55 h7" stroke="#6b6b6b" stroke-width="1.6"/>
 <rect x="537.5" y="52.5" width="6.6" height="5.6" rx="0.8" fill="none" stroke="#1e7ff0" stroke-width="1.3"/>
 <path d="M550,52.5 h7 M550,55 h7 M550,57.5 h7" stroke="#5a5a5a" stroke-width="1.2"/>
 <path d="M630,52.5 h8 M630,55 h8 M630,57.5 h8 M635,50.5 l2.5,2 M635,59.5 l2.5,-2" stroke="#5a5a5a" stroke-width="1" fill="none"/>
 <!-- speaking bar -->
 <rect x="526" y="69.5" width="4" height="6" rx="2" fill="#6f6f6f"/>
 <path d="M525,73.5 q3,4 6,0 M528,77 v2" stroke="#6f6f6f" stroke-width="0.8" fill="none"/>
 <path d="M536.5,68 v12" stroke="#3c3c3c" stroke-width="0.8"/>
 <path d="M613,74 l5,-5 l5,5 l-5,5z M619,74 l5,-5 l5,5 l-5,5z M625,74 l5,-5 l5,5 l-5,5z" fill="#3f3f3f"/>
 <!-- bottom badges -->
 <rect x="520" y="142.7" width="10.3" height="10" fill="#f08a1c"/>
 <circle cx="525.2" cy="146.2" r="1.8" fill="#fff"/>
 <path d="M521.8,151.5 q3.4,-5 6.8,0z" fill="#fff"/>
 <rect x="530.3" y="142.7" width="24" height="10" fill="rgba(20,20,20,.75)"/>
 <rect x="534.6" y="143.8" width="3.6" height="5.2" rx="1.8" fill="#fff"/>
 <path d="M533.4,147.5 q3,4 6,0 M536.4,150.8 v1.6" stroke="#fff" stroke-width="0.9" fill="none"/>
 <path d="M518,147 l7,7 M518,150 l4,4 M635,154 l5,-5 M637.5,154 l2.5,-2.5" stroke="#777" stroke-width="0.8"/>
</svg>
<div class="t" style="left:541px;top:71px;font-size:6px;color:#e8e8e8;letter-spacing:0.2px">正在讲话: 梁昕; 邱晓;</div>
<div class="t" style="left:542px;top:144.8px;font-size:6px;color:#ddd">梁昕</div>
<div id="status" class="a"></div>
<div id="taskbar" class="a"></div>
<div class="t" style="left:-1px;top:415.5px;font-size:6px;color:#444">美国)</div>
<svg class="a" style="left:0;top:400px" width="640" height="26" viewBox="0 400 640 26">
 <rect x="533" y="413.5" width="16" height="10.5" fill="#d2d2d2"/>
 <path d="M521.5,416.5 h2.5 v5 h-2.5z M524.5,416.5 h2.5 v5 h-2.5z" fill="#888"/>
 <rect x="537.5" y="416" width="7" height="5.5" fill="#888"/>
 <rect x="551.5" y="409.5" width="90" height="17" fill="#fff" stroke="#dcdcdc" stroke-width="0.8"/>
 <g transform="rotate(-8 561.5 418)"><rect x="554" y="410.5" width="15" height="15" rx="3" fill="#f2531d"/></g>
 <path d="M565,413.8 q-3,-1.2 -5.5,0.3 q-2,1.6 0.6,3.2 l3.2,1.4 q2.4,1.5 0.2,3 q-2.5,1.3 -5.8,-0.2" stroke="#fff" stroke-width="2" fill="none"/>
 <path d="M572.5,410 v16" stroke="#f3d5cc" stroke-width="0.8"/>
 <text x="577" y="420.5" font-size="8.5" font-weight="bold" fill="#1a6fd8" font-family="Liberation Sans">中</text>
 <circle cx="592" cy="415.5" r="1" fill="#1a6fd8"/>
 <path d="M595,417.5 q1,1.5 -0.5,3" stroke="#1a6fd8" stroke-width="1.3" fill="none"/>
 <circle cx="606.5" cy="417.5" r="4.2" fill="none" stroke="#1a6fd8" stroke-width="1.1"/>
 <circle cx="605" cy="416.5" r="0.6" fill="#1a6fd8"/><circle cx="608" cy="416.5" r="0.6" fill="#1a6fd8"/>
 <path d="M604.8,419.2 h3.4" stroke="#1a6fd8" stroke-width="0.8"/>
 <path d="M617.5,421 l1,-3.5 l5,-5 l2.5,2.5 l-5,5z" fill="none" stroke="#1a6fd8" stroke-width="1.2"/>
 <rect x="632" y="412.5" width="3.2" height="6" rx="1.6" fill="#1a6fd8"/>
 <path d="M630.8,417 q2.8,4 5.6,0 M633.6,420.2 v2 M631.5,422.3 h4" stroke="#1a6fd8" stroke-width="0.9" fill="none"/>
 <rect x="639" y="414" width="1" height="8" fill="#1a6fd8"/>
 <rect x="58" y="424.5" width="4" height="1.5" fill="#e8a070"/>
 <rect x="62" y="424.5" width="4" height="1.5" fill="#8fc8e8"/>
 <rect x="66" y="424.5" width="5" height="1.5" fill="#28a8e0"/>
 <rect x="71" y="424.5" width="480.5" height="1.5" fill="#1a1a1a"/>
</svg>
<!-- PANEL -->
<div class="a" style="left:556px;top:246.5px;width:84px;height:163px;background:#fff;border-left:1px solid #cfcfcf;border-top:1px solid #d6d6d6;box-shadow:-1px 0 2px rgba(0,0,0,.08)"></div>
<svg class="a" style="left:556px;top:246px" width="84" height="164" viewBox="556 246 84 164">
 <defs>
  <linearGradient id="av" x1="0.2" y1="0" x2="0.5" y2="1">
   <stop offset="0" stop-color="#34475a"/><stop offset="0.3" stop-color="#6f93b0"/><stop offset="0.48" stop-color="#b9d2e0"/><stop offset="0.58" stop-color="#f0f5f6"/><stop offset="0.7" stop-color="#5f97a6"/><stop offset="0.85" stop-color="#3f5560"/><stop offset="1" stop-color="#4a4238"/>
  </linearGradient>
 </defs>
 <rect x="563.5" y="270.5" width="80" height="15" rx="1.5" fill="#fff" stroke="#d5d5d5" stroke-width="0.8"/>
 <circle cx="570.3" cy="277.4" r="2.3" fill="none" stroke="#555" stroke-width="0.9"/>
 <path d="M572,279.2 l1.5,1.5" stroke="#555" stroke-width="1"/>
 <circle cx="574" cy="299.4" r="7.9" fill="url(#av)"/>
 <circle cx="574" cy="322" r="7.9" fill="#1a6ff2"/>
 <circle cx="574" cy="345" r="7.9" fill="#1a6ff2"/>
 <path d="M556,401.5 H640" stroke="#ececec" stroke-width="0.8"/>
</svg>
<div class="t" style="left:576px;top:274.5px;font-size:6px;color:#9a9a9a">搜索成员</div>
<div class="t" style="left:587px;top:293.2px;font-size:6px;color:#222;letter-spacing:0.2px">梁昕</div>
<div class="t" style="left:586.5px;top:302.2px;font-size:6px;color:#888;letter-spacing:0.3px">(主持人, 我)</div>
<div class="t" style="left:587px;top:320.7px;font-size:6px;color:#222;letter-spacing:0.2px">邱晓</div>
<div class="t" style="left:587px;top:343px;font-size:6px;color:#222;letter-spacing:0.35px;-webkit-text-stroke:0.1px #222">有梦的人</div>
<div class="t" style="left:568px;top:319px;font-size:6px;color:#fff">邱晓</div>
<div class="t" style="left:568px;top:342px;font-size:6px;color:#fff">的人</div>
<!-- WATERMARK -->
<div class="t" style="left:524px;top:383px;font-size:10px;color:rgba(120,120,120,.45);letter-spacing:0.55px">激活 Windows</div>
<div class="t" style="left:524px;top:395.5px;font-size:7px;color:rgba(120,120,120,.45);letter-spacing:0.38px">转到“设置”以激活 Windows。</div>
</body></html>
